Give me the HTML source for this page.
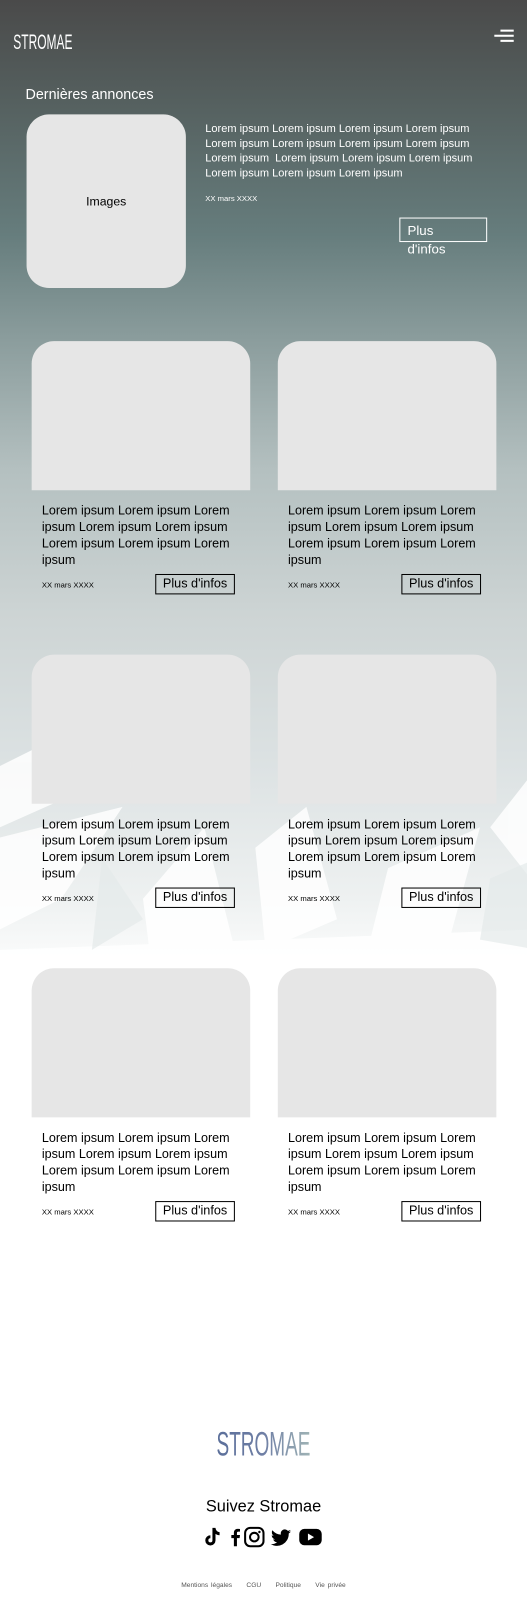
<!DOCTYPE html>
<html><head><meta charset="utf-8"><style>
*{margin:0;padding:0;box-sizing:border-box}
body{width:527px;height:1600px;position:relative;overflow:hidden;font-family:"Liberation Sans",sans-serif;background:#fff}
#w{position:absolute;left:0;top:0;width:516px;height:1567px;transform:scale(1.02132);transform-origin:0 0;
background:linear-gradient(180deg,#4a4a4a 0px,#55605f 100px,#667d7d 230px,#8a9c9c 330px,#b4c0c0 460px,#cdd4d4 600px,#dbe1e2 740px,#eef1f1 880px,#fff 960px,#fff 1567px)}
.abs{position:absolute}
.card{position:absolute;width:214px}
.card .img{height:146px;background:#e6e6e6;border-radius:22px 22px 0 0}
.card .t{position:absolute;left:10px;top:158px;width:200px;font-size:12.3px;line-height:16px;color:#000}
.card .d{position:absolute;left:10px;top:234px;font-size:7.5px;color:#000}
.card .b{position:absolute;left:121px;top:228px;width:78px;height:20px;border:1.5px solid #000;font-size:12.4px;text-align:center;line-height:17px;color:#000}
</style></head><body><div id="w">
<svg class="abs" style="left:0;top:730px" width="527" height="240" viewBox="0 0 527 240">
<g fill="#fff" opacity="0.85">
<polygon points="0,20 40,0 90,40 0,80"/>
<polygon points="0,90 120,60 60,150 0,180"/>
<polygon points="140,150 200,80 230,200 150,230"/>
<polygon points="250,100 300,60 330,170 260,200"/>
<polygon points="380,120 470,80 440,190 360,200"/>
<polygon points="527,20 480,80 527,140"/>
<polygon points="0,200 527,180 527,240 0,240"/>
</g>
<g fill="#e4e9ea" opacity="0.7">
<polygon points="100,110 140,170 90,200"/>
<polygon points="480,130 527,110 527,200 470,190"/>
</g>
</svg>
<svg class="abs" style="left:13px;top:28px" width="62" height="26"><text x="0" y="20" font-family="Liberation Sans" font-size="21" fill="#fff" textLength="58" lengthAdjust="spacingAndGlyphs">STROMAE</text></svg>
<div class="abs" style="left:490px;top:29px;width:13px;height:1.5px;background:#fff"></div>
<div class="abs" style="left:484px;top:34px;width:19px;height:1.5px;background:#fff"></div>
<div class="abs" style="left:490px;top:39px;width:13px;height:1.5px;background:#fff"></div>
<div class="abs" style="left:25px;top:84px;font-size:14px;color:#fff">Dernières annonces</div>
<div class="abs" style="left:26px;top:112px;width:156px;height:170px;background:#e6e6e6;border-radius:22px;text-align:center;line-height:170px;font-size:12px">Images</div>
<div class="abs" style="left:201px;top:119px;width:285px;font-size:10.8px;line-height:14.5px;color:#fff">Lorem ipsum Lorem ipsum Lorem ipsum Lorem ipsum Lorem ipsum Lorem ipsum Lorem ipsum Lorem ipsum Lorem ipsum &nbsp;Lorem ipsum Lorem ipsum Lorem ipsum Lorem ipsum Lorem ipsum Lorem ipsum</div>
<div class="abs" style="left:201px;top:190px;font-size:7.5px;color:#fff">XX mars XXXX</div>
<div class="abs" style="left:391px;top:213px;width:86px;height:24px;border:1.5px solid #fff"></div>
<div class="abs" style="left:399px;top:217px;width:60px;font-size:13px;line-height:18px;color:#fff">Plus d'infos</div>

<div class="card" style="left:31px;top:334px"><div class="img"></div><div class="t">Lorem ipsum Lorem ipsum Lorem ipsum Lorem ipsum Lorem ipsum Lorem ipsum Lorem ipsum Lorem ipsum</div><div class="d">XX mars XXXX</div><div class="b">Plus d'infos</div></div>
<div class="card" style="left:272px;top:334px"><div class="img"></div><div class="t">Lorem ipsum Lorem ipsum Lorem ipsum Lorem ipsum Lorem ipsum Lorem ipsum Lorem ipsum Lorem ipsum</div><div class="d">XX mars XXXX</div><div class="b">Plus d'infos</div></div>
<div class="card" style="left:31px;top:641px"><div class="img"></div><div class="t">Lorem ipsum Lorem ipsum Lorem ipsum Lorem ipsum Lorem ipsum Lorem ipsum Lorem ipsum Lorem ipsum</div><div class="d">XX mars XXXX</div><div class="b">Plus d'infos</div></div>
<div class="card" style="left:272px;top:641px"><div class="img"></div><div class="t">Lorem ipsum Lorem ipsum Lorem ipsum Lorem ipsum Lorem ipsum Lorem ipsum Lorem ipsum Lorem ipsum</div><div class="d">XX mars XXXX</div><div class="b">Plus d'infos</div></div>
<div class="card" style="left:31px;top:948px"><div class="img"></div><div class="t">Lorem ipsum Lorem ipsum Lorem ipsum Lorem ipsum Lorem ipsum Lorem ipsum Lorem ipsum Lorem ipsum</div><div class="d">XX mars XXXX</div><div class="b">Plus d'infos</div></div>
<div class="card" style="left:272px;top:948px"><div class="img"></div><div class="t">Lorem ipsum Lorem ipsum Lorem ipsum Lorem ipsum Lorem ipsum Lorem ipsum Lorem ipsum Lorem ipsum</div><div class="d">XX mars XXXX</div><div class="b">Plus d'infos</div></div>

<svg class="abs" style="left:212px;top:1394px" width="94" height="40"><defs><linearGradient id="g" x1="0" x2="1"><stop offset="0" stop-color="#5b6f9a"/><stop offset="0.5" stop-color="#6f7fa5"/><stop offset="1" stop-color="#9fb3b5"/></linearGradient></defs><text x="0" y="31" font-family="Liberation Sans" font-size="34" fill="url(#g)" textLength="92" lengthAdjust="spacingAndGlyphs">STROMAE</text></svg>
<div class="abs" style="left:0;width:516px;top:1467px;text-align:center;font-size:16px;color:#000">Suivez Stromae</div>
<svg class="abs" style="left:199px;top:1494px" width="120" height="22" viewBox="0 0 120 22">
<path d="M9 2h3c.3 2.5 1.8 4 4 4.2v3c-1.5 0-2.9-.5-4-1.3v6.3a5 5 0 1 1-5-5v3a2 2 0 1 0 2 2z" fill="#000"/>
<path d="M30 20v-8h-2.5v-3H30V7c0-2.7 1.5-4 3.8-4 1 0 1.8.1 2.2.1v2.6h-1.5c-1.2 0-1.5.6-1.5 1.4V9h3l-.4 3H33v8z" fill="#000"/>
<rect x="41" y="2" width="18" height="18" rx="5" fill="none" stroke="#000" stroke-width="2"/><circle cx="50" cy="11" r="4.2" fill="none" stroke="#000" stroke-width="2"/><circle cx="55" cy="6" r="1.2" fill="#000"/>
<path d="M86 5.5c-.7.3-1.5.5-2.3.6.8-.5 1.5-1.3 1.8-2.2-.8.5-1.7.8-2.6 1a4 4 0 0 0-6.9 3.7A11.5 11.5 0 0 1 67.7 4.3a4 4 0 0 0 1.2 5.4c-.7 0-1.3-.2-1.8-.5 0 2 1.4 3.6 3.2 4-.6.2-1.2.2-1.8.1.5 1.6 2 2.8 3.8 2.8A8 8 0 0 1 66 17.8 11.5 11.5 0 0 0 83.7 8v-.5c.9-.6 1.6-1.3 2.3-2z" fill="#000"/>
<rect x="94" y="3" width="22" height="16" rx="5" fill="#000"/><path d="M102.5 7.5v7l6-3.5z" fill="#fff"/>
</svg>
<div class="abs" style="left:0;width:516px;top:1549px;text-align:center;font-size:6.5px;color:#555;word-spacing:1px">Mentions légales &nbsp;&nbsp;&nbsp; CGU &nbsp;&nbsp;&nbsp; Politique &nbsp;&nbsp;&nbsp; Vie privée</div>
</div></body></html>
